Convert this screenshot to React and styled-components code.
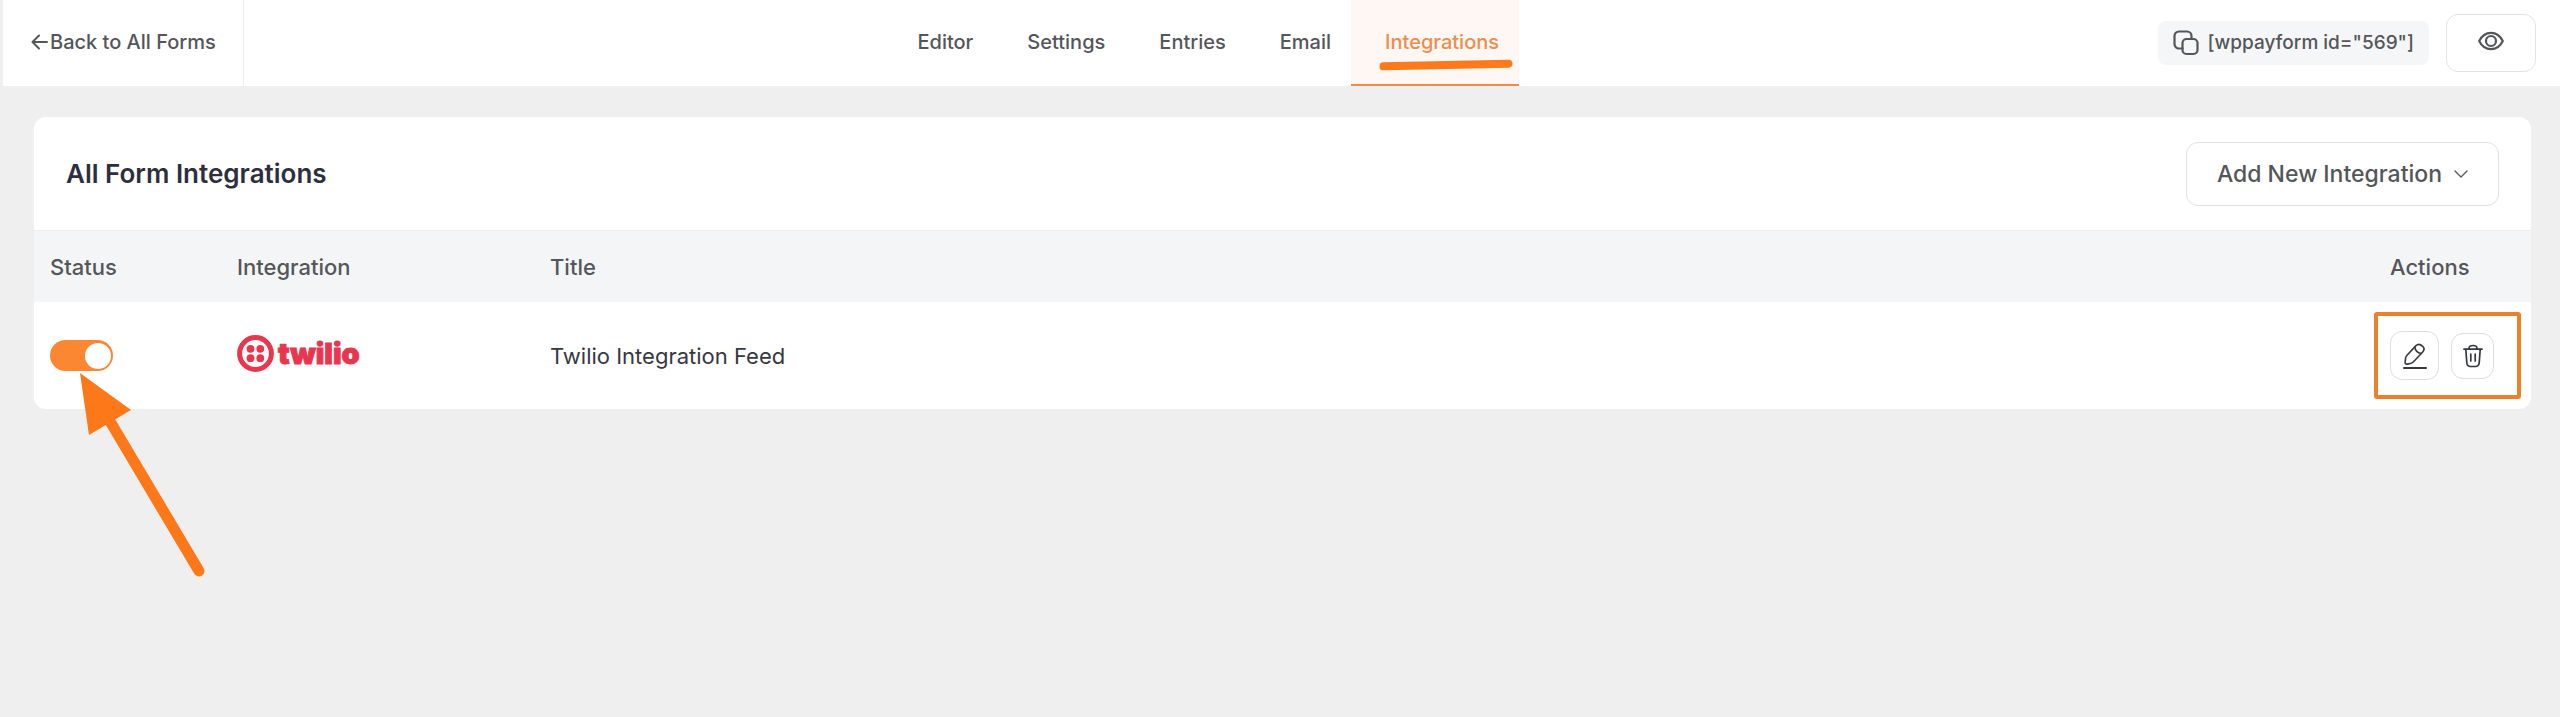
import React, { useState } from "react";
import styled, { createGlobalStyle } from "styled-components";

const GlobalStyle = createGlobalStyle`
  *, *::before, *::after {
    box-sizing: border-box;
  }
  body {
    margin: 0;
    background: #efefef;
    color: #54565a;
    font-family: Inter, "Liberation Sans", sans-serif;
    font-size: 22px;
    line-height: 28px;
  }
  button {
    font: inherit;
    color: inherit;
    cursor: pointer;
  }
  svg {
    display: block;
    flex: none;
  }
`;

const Page = styled.div`
  min-height: 100vh;
`;

const TopBar = styled.header`
  display: flex;
  justify-content: space-between;
  height: 86px;
  margin-left: 3px;
  padding-right: 24px;
  background: #fff;
`;

const BackLink = styled.a`
  display: flex;
  align-items: center;
  width: 241px;
  padding: 0 0 2px 28px;
  border-right: 1px solid #ececec;
  color: inherit;
  font-size: 20px;
  font-weight: 500;
  text-decoration: none;
  white-space: nowrap;
  svg {
    margin-right: 2px;
  }
`;

const Nav = styled.nav`
  display: flex;
`;

const Tab = styled.a`
  position: relative;
  display: flex;
  align-items: center;
  padding: 0 20px 0 34px;
  border-bottom: 2px solid ${(props) => (props.$active ? "#ee8c4c" : "transparent")};
  background: ${(props) => (props.$active ? "#fef7f3" : "transparent")};
  color: ${(props) => (props.$active ? "#ee8c4c" : "inherit")};
  font-size: 20px;
  font-weight: 500;
  text-decoration: none;
`;

const TabMarker = styled.svg`
  position: absolute;
  left: 28px;
  bottom: 13px;
`;

const Tools = styled.div`
  display: flex;
  align-items: center;
  gap: 17px;
`;

const Shortcode = styled.button`
  display: flex;
  align-items: center;
  gap: 8px;
  height: 44px;
  padding: 0 15px;
  border: 0;
  border-radius: 8px;
  background: #f4f6f8;
  font-size: 19px;
  font-weight: 500;
`;

const PreviewButton = styled.button`
  display: flex;
  align-items: center;
  justify-content: center;
  width: 90px;
  height: 58px;
  padding: 0 0 4px;
  border: 1px solid #e1e3e6;
  border-radius: 12px;
  background: #fff;
`;

const Card = styled.main`
  margin: 31px 29px 0 34px;
  border-radius: 12px;
  background: #fff;
`;

const CardHeader = styled.div`
  display: flex;
  align-items: center;
  justify-content: space-between;
  padding: 25px 32px 24px;
  h1 {
    margin: 0;
    color: #2d2f3d;
    font-size: 26px;
    font-weight: 600;
  }
`;

const AddButton = styled.button`
  display: flex;
  align-items: center;
  gap: 12px;
  height: 64px;
  padding: 0 30px;
  border: 1px solid #dfe1e4;
  border-radius: 12px;
  background: #fff;
  font-size: 23px;
  font-weight: 500;
`;

const Table = styled.table`
  width: 100%;
  border-collapse: separate;
  border-spacing: 0;
  table-layout: fixed;
`;

const HeadCell = styled.th`
  width: ${(props) => props.$width || "auto"};
  height: 72px;
  padding: 0 16px;
  border-top: 1px solid #eaecee;
  background: #f4f5f7;
  font-weight: 500;
  text-align: left;
`;

const Cell = styled.td`
  height: 107px;
  padding: 0 16px;
  color: #36383f;
  vertical-align: middle;
`;

const ToggleWrap = styled.div`
  position: relative;
  display: flex;
`;

const Toggle = styled.input`
  appearance: none;
  display: flex;
  align-items: center;
  justify-content: ${(props) => (props.checked ? "flex-end" : "flex-start")};
  width: 63px;
  height: 31px;
  margin: 0;
  padding: 0 2px;
  border-radius: 16px;
  background: ${(props) => (props.checked ? "#fb8733" : "#c8cacf")};
  cursor: pointer;
  &::before {
    content: "";
    width: 26px;
    height: 26px;
    border-radius: 50%;
    background: #fff;
  }
`;

const Pointer = styled.svg`
  position: absolute;
  top: 33px;
  left: 30px;
  pointer-events: none;
`;

const Brand = styled.div`
  display: flex;
  align-items: center;
  gap: 4px;
  padding-bottom: 4px;
  color: #e8364f;
  font-size: 29px;
  font-weight: 900;
  line-height: 36px;
  -webkit-text-stroke: 1px #e8364f;
`;

const Actions = styled.div`
  position: relative;
  display: flex;
  align-items: center;
  gap: 12px;
  &::after {
    content: "";
    position: absolute;
    top: -19px;
    left: -16px;
    width: 147px;
    height: 87px;
    border: 4px solid #ee7f2b;
    border-radius: 3px;
    pointer-events: none;
  }
`;

const IconButton = styled.button`
  display: flex;
  align-items: center;
  justify-content: center;
  width: ${(props) => (props.$small ? "43px" : "49px")};
  height: ${(props) => (props.$small ? "46px" : "49px")};
  padding: 0;
  border: 1px solid #dcdee1;
  border-radius: 12px;
  background: #fff;
`;

const stroke = {
  fill: "none",
  stroke: "currentColor",
  strokeLinecap: "round",
  strokeLinejoin: "round",
  "aria-hidden": true,
};

function ArrowLeft() {
  return (
    <svg width="17" height="16" viewBox="0 0 17 16" strokeWidth="2" {...stroke}>
      <path d="M16 8H1.500M8 1.500 1.500 8 8 14.500" />
    </svg>
  );
}

function CopyIcon() {
  return (
    <svg width="26" height="26" viewBox="0 0 26 26" strokeWidth="2.200" {...stroke}>
      <rect x="9.500" y="9" width="15" height="15" rx="4" />
      <path d="M9.500 18.500H6a4.500 4.500 0 0 1-4.500-4.500V6A4.500 4.500 0 0 1 6 1.500h8A4.500 4.500 0 0 1 18.500 6v3" />
    </svg>
  );
}

function EyeIcon() {
  return (
    <svg width="26" height="20" viewBox="0 0 26 20" strokeWidth="2.200" {...stroke}>
      <path d="M1.200 10C3.800 4.700 8 1.800 13 1.800S22.200 4.700 24.800 10C22.200 15.300 18 18.200 13 18.200S3.800 15.300 1.200 10Z" />
      <circle cx="13" cy="10" r="5" />
    </svg>
  );
}

function ChevronDown() {
  return (
    <svg width="14" height="8" viewBox="0 0 14 8" strokeWidth="1.300" {...stroke}>
      <path d="m1 1 6 6 6-6" />
    </svg>
  );
}

function EditIcon() {
  return (
    <svg width="24" height="26" viewBox="0 0 24 26" strokeWidth="1.600" {...stroke}>
      <path d="M13 2.600 4 12.300c-.9 1-1.300 2.100-1.500 3.400l-.4 3.600c-.1 1.200.7 2 1.900 1.800l3.500-.6c1.200-.2 2.100-.8 3-1.700l9-9.500c1.700-1.800 2.300-4 .2-6-2.300-2.200-4.900-2.400-6.700-.7Z" />
      <path d="M11.800 4.200c.5 3.400 3 5.800 6.300 6.300" />
      <path d="M1 25h22" strokeWidth="2" />
    </svg>
  );
}

function TrashIcon() {
  return (
    <svg width="20" height="24" viewBox="0 0 20 24" strokeWidth="1.700" {...stroke}>
      <path d="M1 5.200h18M6 5V4.300C6 2.500 7.500 1.500 10 1.500s4 1 4 2.800V5" />
      <path d="m2.800 5.500 1 13.300c.2 2.500 1 3.700 3.700 3.700h5c2.700 0 3.500-1.200 3.700-3.700l1-13.300" />
      <path d="M7.800 10v7M12.200 10v7" />
    </svg>
  );
}

function TwilioMark() {
  return (
    <svg width="37" height="37" viewBox="0 0 37 37" fill="currentColor" aria-hidden="true">
      <circle cx="18.500" cy="18.500" r="15.900" fill="none" stroke="currentColor" strokeWidth="5" />
      <circle cx="13.500" cy="13.800" r="3.900" />
      <circle cx="23.300" cy="13.800" r="3.900" />
      <circle cx="13.500" cy="23.200" r="3.900" />
      <circle cx="23.300" cy="23.200" r="3.900" />
    </svg>
  );
}

const tabs = ["Editor", "Settings", "Entries", "Email", "Integrations"];

export default function App() {
  const [enabled, setEnabled] = useState(true);

  return (
    <Page>
      <GlobalStyle />
      <TopBar>
        <BackLink href="#forms">
          <ArrowLeft />
          Back to All Forms
        </BackLink>
        <Nav>
          {tabs.map((tab) => (
            <Tab key={tab} href={"#" + tab.toLowerCase()} $active={tab === "Integrations"}>
              {tab}
              {tab === "Integrations" && (
                <TabMarker width="134" height="12" viewBox="0 0 134 12" aria-hidden="true">
                  <path d="M4.500 7.300 129.500 4.700" stroke="#fc7a1c" strokeWidth="8" strokeLinecap="round" />
                </TabMarker>
              )}
            </Tab>
          ))}
        </Nav>
        <Tools>
          <Shortcode type="button">
            <CopyIcon />
            [wppayform id="569"]
          </Shortcode>
          <PreviewButton type="button" aria-label="Preview">
            <EyeIcon />
          </PreviewButton>
        </Tools>
      </TopBar>

      <Card>
        <CardHeader>
          <h1>All Form Integrations</h1>
          <AddButton type="button" aria-haspopup="menu">
            Add New Integration
            <ChevronDown />
          </AddButton>
        </CardHeader>
        <Table>
          <thead>
            <tr>
              <HeadCell scope="col" $width="187px">Status</HeadCell>
              <HeadCell scope="col" $width="313px">Integration</HeadCell>
              <HeadCell scope="col">Title</HeadCell>
              <HeadCell scope="col" $width="157px">Actions</HeadCell>
            </tr>
          </thead>
          <tbody>
            <tr>
              <Cell>
                <ToggleWrap>
                  <Toggle
                    type="checkbox"
                    role="switch"
                    aria-label="Twilio Integration Feed status"
                    checked={enabled}
                    onChange={(e) => setEnabled(e.target.checked)}
                  />
                  <Pointer width="128" height="208" viewBox="0 0 128 208" aria-hidden="true">
                    <path d="M31 50 119 198" stroke="#fc7819" strokeWidth="11" strokeLinecap="round" />
                    <path d="M0 0 51 37 9 62Z" fill="#fc7819" />
                  </Pointer>
                </ToggleWrap>
              </Cell>
              <Cell>
                <Brand>
                  <TwilioMark />
                  twilio
                </Brand>
              </Cell>
              <Cell>Twilio Integration Feed</Cell>
              <Cell>
                <Actions>
                  <IconButton type="button" aria-label="Edit">
                    <EditIcon />
                  </IconButton>
                  <IconButton type="button" aria-label="Delete" $small>
                    <TrashIcon />
                  </IconButton>
                </Actions>
              </Cell>
            </tr>
          </tbody>
        </Table>
      </Card>
    </Page>
  );
}
